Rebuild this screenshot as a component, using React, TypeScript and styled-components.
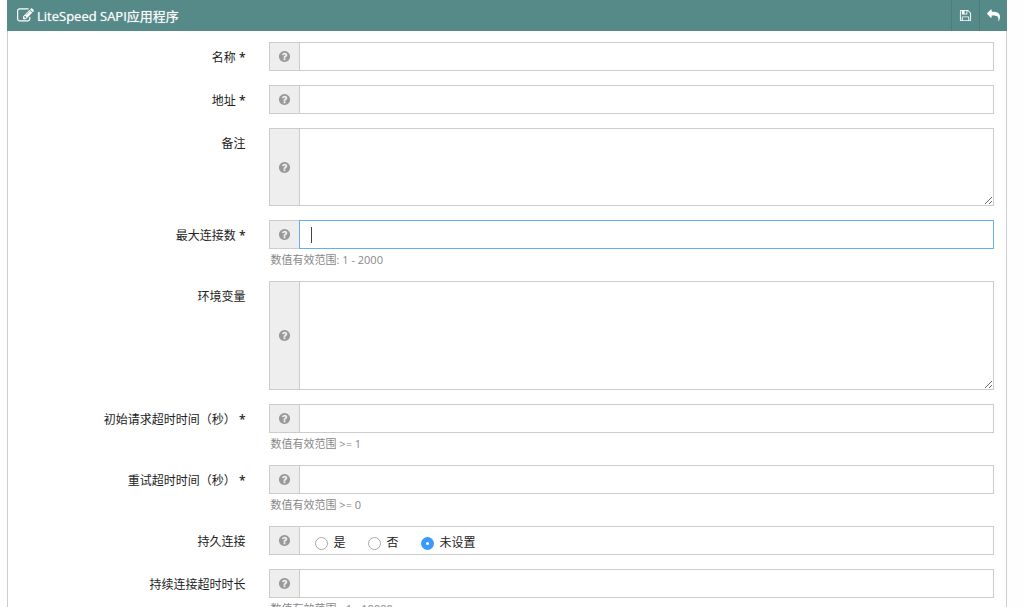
import React from "react";
import styled, { createGlobalStyle } from "styled-components";

const GlobalStyle = createGlobalStyle`
  *, *::before, *::after { box-sizing: border-box; }
  body {
    margin: 0;
    background: #fefefe;
    color: #222;
    font-family: "Open Sans", "Noto Sans CJK SC", sans-serif;
    font-size: 12px;
    line-height: 18px;
  }
  input, textarea, button { font: inherit; color: inherit; }
`;

const Panel = styled.section`
  margin: 0 17px 0 7px;
  border: 1px solid #ccc;
  border-top: 0;
  background: #fff;
`;

const Header = styled.header`
  display: flex;
  align-items: center;
  height: 31px;
  margin: 0 -1px;
  padding-left: 10px;
  background: #568a89;
  color: #fff;
`;

const Title = styled.h2`
  flex: 1;
  display: flex;
  align-items: center;
  gap: 3px;
  margin: 0;
  font-size: 13px;
  font-weight: 400;
  text-shadow: 0 0 1px rgba(255, 255, 255, 0.6);
`;

const ToolButton = styled.button`
  display: flex;
  align-items: center;
  justify-content: center;
  width: 28px;
  height: 31px;
  padding: 0;
  border: 0;
  border-left: 1px solid #4c7c7b;
  background: transparent;
  cursor: pointer;
`;

const Form = styled.form`
  display: flex;
  flex-direction: column;
  gap: 14px;
  padding: 11px 12px 14px;
`;

const Row = styled.div`
  display: grid;
  grid-template-columns: 25% minmax(0, 1fr);
  column-gap: 5px;
`;

const labelText = `
  padding: 7px 18px 0 0;
  text-align: right;
`;

const Label = styled.label`
  ${labelText}
`;

const GroupLabel = styled.span`
  ${labelText}
`;

const Required = styled.span`
  font-weight: 600;
`;

const Group = styled.div<{ $height: number }>`
  display: flex;
  height: ${(p) => p.$height}px;
`;

const Addon = styled.span`
  display: flex;
  flex: none;
  align-items: center;
  justify-content: center;
  width: 30px;
  border: 1px solid #ccc;
  border-right: 0;
  background: #eee;
`;

const InputWrap = styled.span`
  position: relative;
  flex: 1;
  display: flex;
  min-width: 0;
`;

const Caret = styled.span`
  position: absolute;
  top: 7px;
  left: 12px;
  width: 1px;
  height: 16px;
  background: #444;
  pointer-events: none;
`;

const Input = styled.input`
  flex: 1;
  min-width: 0;
  padding: 0 11px;
  border: 1px solid #ccc;
  border-radius: 0;
  background: #fff;
  outline: 0;
  caret-color: transparent;
  &:focus { border-color: #66afe9; }
  &:not(:focus) + ${Caret}, &:not(:placeholder-shown) + ${Caret} { display: none; }
  &:not(:placeholder-shown) { caret-color: auto; }
`;

const TextArea = styled.textarea`
  flex: 1;
  min-width: 0;
  margin: 0;
  padding: 5px 11px;
  border: 1px solid #ccc;
  border-radius: 0;
  background: #fff;
  outline: 0;
  resize: vertical;
  &:focus { border-color: #66afe9; }
`;

const Hint = styled.p`
  margin: 3px 0 0;
  padding-left: 2px;
  line-height: 15px;
  font-size: 11px;
  color: #888;
`;

const Choices = styled.div`
  flex: 1;
  display: flex;
  align-items: center;
  gap: 22px;
  padding: 4px 15px 0;
  border: 1px solid #ccc;
`;

const Choice = styled.label`
  display: flex;
  align-items: center;
  gap: 6px;
`;

const Radio = styled.input`
  appearance: none;
  width: 13px;
  height: 13px;
  margin: 1px 0 0;
  border: 1px solid #aaa;
  border-radius: 50%;
  background: #fff;
  &:checked {
    border: 5px solid #3b99fc;
  }
`;

const paths = {
  edit: "M888 1184l116-116-152-152-116 116v56h96v96h56zm440-720q-16-16-33 1l-350 350q-17 17-1 33t33-1l350-350q17-17 1-33zm80 594v190q0 119-84.5 203.5t-203.5 84.5h-832q-119 0-203.5-84.5t-84.5-203.5v-832q0-119 84.5-203.5t203.5-84.5h832q63 0 117 25 15 7 18 23 3 17-9 29l-49 49q-14 14-32 8-23-6-45-6h-832q-66 0-113 47t-47 113v832q0 66 47 113t113 47h832q66 0 113-47t47-113v-126q0-13 9-22l64-64q15-15 35-7t20 29zm-96-738l288 288-672 672h-288v-288zm444 132l-92 92-288-288 92-92q28-28 68-28t68 28l152 152q28 28 28 68t-28 68z",
  save: "M512 1536h768v-384h-768v384zm896 0h128v-896q0-14-10-38.5t-20-34.5l-281-281q-10-10-34-20t-39-10v416q0 40-28 68t-68 28h-576q-40 0-68-28t-28-68v-416h-128v1280h128v-416q0-40 28-68t68-28h832q40 0 68 28t28 68v416zm-384-928v-320q0-13-9.5-22.5t-22.5-9.5h-192q-13 0-22.5 9.5t-9.5 22.5v320q0 13 9.5 22.5t22.5 9.5h192q13 0 22.5-9.5t9.5-22.5zm640 32v928q0 40-28 68t-68 28h-1344q-40 0-68-28t-28-68v-1344q0-40 28-68t68-28h928q40 0 88 20t76 48l280 280q28 28 48 76t20 88z",
  reply: "M1792 1120q0 166-127 451-3 7-10.5 24t-13.5 30-13 22q-12 17-28 17-15 0-23.5-10t-8.5-25q0-9 2.5-26.5t2.5-23.5q5-68 5-123 0-101-17.5-181t-48.5-138.5-80-101-105.5-69.5-133-42.5-154-21.5-175.5-6h-224v256q0 26-19 45t-45 19-45-19l-512-512q-19-19-19-45t19-45l512-512q19-19 45-19t45 19 19 45v256h224q713 0 875 403 53 134 53 333z",
  help: "M1024 1376v-192q0-14-9-23t-23-9h-192q-14 0-23 9t-9 23v192q0 14 9 23t23 9h192q14 0 23-9t9-23zm256-672q0-88-55.5-163t-138.5-116-170-41q-243 0-371 213-15 24 8 42l132 100q7 6 19 6 16 0 25-12 53-68 86-92 34-24 86-24 48 0 85.5 26t37.5 59q0 38-20 61t-68 45q-63 28-115.5 86.5t-52.5 125.5v36q0 14 9 23t23 9h192q14 0 23-9t9-23q0-19 21.5-49.5t54.5-49.5q32-18 49-28.5t46-35 44.5-48 28-60.5 12.5-81zm384 192q0 209-103 385.5t-279.5 279.5-385.5 103-385.5-103-279.5-279.5-103-385.5 103-385.5 279.5-279.5 385.5-103 385.5 103 279.5 279.5 103 385.5z",
};

function Icon({ name, size, color }: { name: keyof typeof paths; size: number; color: string }) {
  return (
    <svg width={size} height={size} viewBox="0 0 1792 1792" fill={color} aria-hidden="true">
      <path d={paths[name]} />
    </svg>
  );
}

type Field = {
  id: string;
  label: string;
  kind?: "text" | "area" | "radio";
  height?: number;
  hint?: string;
  required?: boolean;
  focused?: boolean;
};

const fields: Field[] = [
  { id: "name", label: "名称", required: true },
  { id: "address", label: "地址", required: true },
  { id: "note", label: "备注", kind: "area", height: 78 },
  { id: "maxConns", label: "最大连接数", required: true, hint: "数值有效范围: 1 - 2000", focused: true },
  { id: "env", label: "环境变量", kind: "area", height: 109 },
  { id: "initTimeout", label: "初始请求超时时间（秒）", required: true, hint: "数值有效范围 >= 1" },
  { id: "retryTimeout", label: "重试超时时间（秒）", required: true, hint: "数值有效范围 >= 0" },
  { id: "persistConn", label: "持久连接", kind: "radio" },
  { id: "keepAlive", label: "持续连接超时时长", hint: "数值有效范围: -1 - 10000" },
];

const options = ["是", "否", "未设置"];

function FieldRow({ id, label, kind = "text", height = 29, hint, required, focused }: Field) {
  return (
    <Row>
      {kind === "radio" ? (
        <GroupLabel id={`${id}-label`}>{label}</GroupLabel>
      ) : (
        <Label htmlFor={id}>
          {label}
          {required && <Required> *</Required>}
        </Label>
      )}
      <div>
        <Group $height={height}>
          <Addon>
            <Icon name="help" size={13} color="#999" />
          </Addon>
          {kind === "text" && (
            <InputWrap>
              <Input id={id} name={id} type="text" placeholder=" " autoFocus={focused} />
              <Caret />
            </InputWrap>
          )}
          {kind === "area" && <TextArea id={id} name={id} />}
          {kind === "radio" && (
            <Choices role="radiogroup" aria-labelledby={`${id}-label`}>
              {options.map((option) => (
                <Choice key={option}>
                  <Radio type="radio" name={id} value={option} defaultChecked={option === "未设置"} />
                  {option}
                </Choice>
              ))}
            </Choices>
          )}
        </Group>
        {hint && <Hint>{hint}</Hint>}
      </div>
    </Row>
  );
}

export default function App() {
  return (
    <>
      <GlobalStyle />
      <Panel>
        <Header>
          <Title>
            <Icon name="edit" size={17} color="#fff" />
            LiteSpeed SAPI应用程序
          </Title>
          <ToolButton type="button" aria-label="保存">
            <Icon name="save" size={13} color="#fff" />
          </ToolButton>
          <ToolButton type="button" aria-label="返回">
            <Icon name="reply" size={13} color="#fff" />
          </ToolButton>
        </Header>
        <Form>
          {fields.map((field) => (
            <FieldRow key={field.id} {...field} />
          ))}
        </Form>
      </Panel>
    </>
  );
}
